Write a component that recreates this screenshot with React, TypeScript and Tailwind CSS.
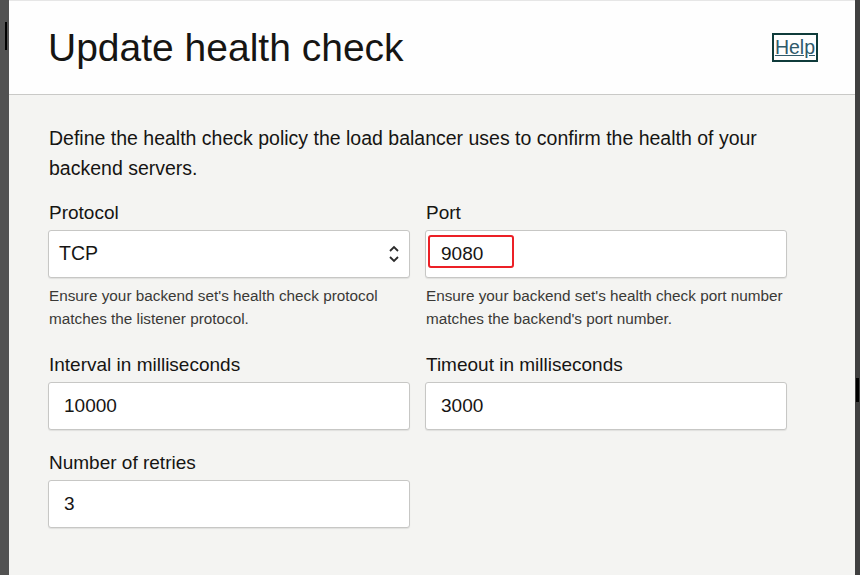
import { FC, ReactNode } from "react";

const Field: FC<{ label: string; children: ReactNode; help?: string[] }> = ({
  label,
  children,
  help,
}) => (
  <div className="flex flex-col">
    <label className="text-[19px] leading-[24px] text-[#161513] pl-[1px]">{label}</label>
    <div className="mt-[5px]">{children}</div>
    {help && (
      <p className="mt-[6px] text-[15.3px] leading-[23px] text-[#3a3936] pl-[1px]">
        {help[0]}
        <br />
        {help[1]}
      </p>
    )}
  </div>
);

const TextBox: FC<{ value: string; marked?: boolean }> = ({ value, marked }) => (
  <div className="relative h-[48px] bg-white border border-[#c7c7c5] rounded-[3px] shadow-[0_1px_1px_rgba(0,0,0,0.08)] flex items-center pl-[15px] text-[19px] text-[#161513]">
    {value}
    {marked && (
      <div className="absolute left-[2px] top-[4px] w-[86px] h-[33px] border-2 border-[#ec2026] rounded-[3px]" />
    )}
  </div>
);

const SelectBox: FC<{ value: string }> = ({ value }) => (
  <div className="h-[48px] bg-white border border-[#c7c7c5] rounded-[3px] shadow-[0_1px_1px_rgba(0,0,0,0.08)] flex items-center justify-between pl-[10px] pr-[9px] text-[19.5px] text-[#161513]">
    <span>{value}</span>
    <svg width="12" height="22" viewBox="0 0 12 22" fill="none" stroke="#2b2b2b" strokeWidth="1.8">
      <path d="M2 8 L6 4 L10 8" />
      <path d="M2 14 L6 18 L10 14" />
    </svg>
  </div>
);

export default function App() {
  return (
    <div
      className="w-[860px] h-[575px] flex overflow-hidden bg-neutral-600"
      style={{ fontFamily: '"Liberation Sans", Arial, sans-serif' }}
    >
      <div className="w-[9px] shrink-0 self-stretch bg-neutral-600 relative">
        <div className="absolute left-[5px] top-[22px] w-[2px] h-[28px] bg-black" />
      </div>
      <div className="w-[846px] shrink-0 bg-[#f4f4f2] flex flex-col">
        <div className="h-[95px] bg-[#fefefe] border-t border-[#e6e6e6] border-b border-b-[#c9c9c7] flex items-center justify-between pl-[39px] pr-[37px]">
          <h1 className="text-[39px] leading-[45px] text-[#161513]">Update health check</h1>
          <a className="border-2 border-[#0f3b3a] px-[1px] text-[19.5px] leading-[25px] text-[#2f5a6b] underline">
            Help
          </a>
        </div>
        <div className="pl-[39px] pt-[28px]">
          <p className="text-[19.5px] leading-[30px] text-[#161513] pl-[1px] w-[760px]">
            Define the health check policy the load balancer uses to confirm the health of your
            backend servers.
          </p>
          <div className="mt-[18px] grid grid-cols-[362px_362px] gap-x-[15px]">
            <Field
              label="Protocol"
              help={["Ensure your backend set's health check protocol", "matches the listener protocol."]}
            >
              <SelectBox value="TCP" />
            </Field>
            <Field
              label="Port"
              help={["Ensure your backend set's health check port number", "matches the backend's port number."]}
            >
              <TextBox value="9080" marked />
            </Field>
            <div className="mt-[23px]">
              <Field label="Interval in milliseconds">
                <TextBox value="10000" />
              </Field>
            </div>
            <div className="mt-[23px]">
              <Field label="Timeout in milliseconds">
                <TextBox value="3000" />
              </Field>
            </div>
            <div className="mt-[21px]">
              <Field label="Number of retries">
                <TextBox value="3" />
              </Field>
            </div>
          </div>
        </div>
      </div>
      <div className="w-[5px] shrink-0 self-stretch bg-neutral-700 relative">
        <div className="absolute left-[1px] top-[378px] w-[3px] h-[24px] bg-black" />
      </div>
    </div>
  );
}
